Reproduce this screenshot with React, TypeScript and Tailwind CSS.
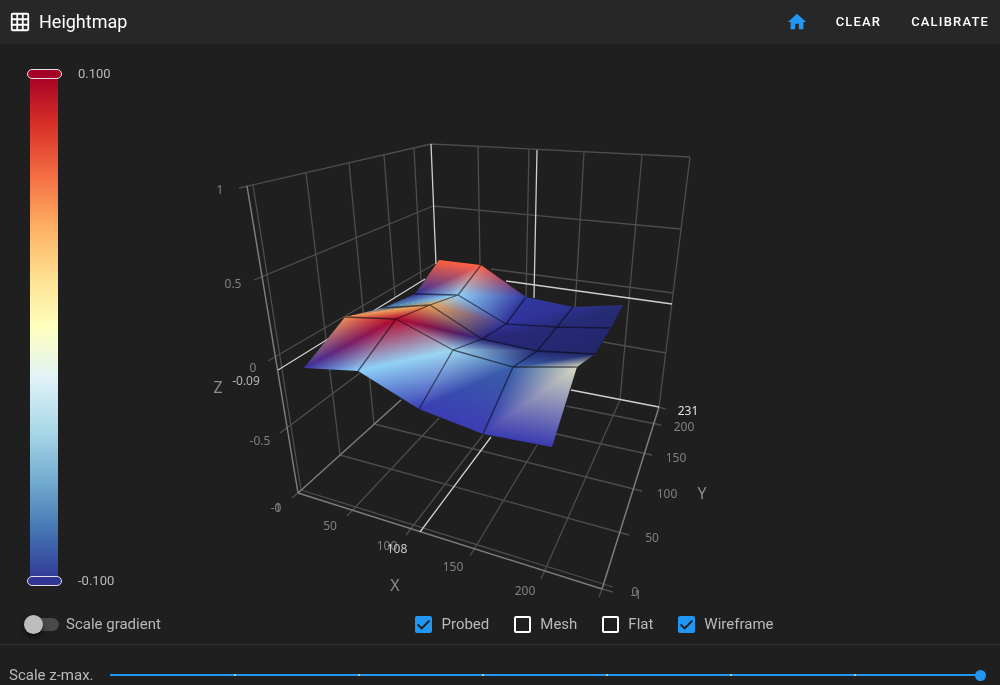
import { useState } from "react";

type Point = [number, number];
type RGB = [number, number, number];
type Vertex = { p: Point; c: RGB };
type Line = [number, number, number, number];

const v = (x: number, y: number, r: number, g: number, b: number): Vertex => ({
  p: [x, y],
  c: [r, g, b],
});

// Probed points, projected, from the back row to the front row.
const mesh: Vertex[][] = [
  [v(439, 260, 255, 96, 62), v(481, 265, 255, 98, 70), v(526, 297, 50, 56, 160), v(573, 307, 46, 50, 145), v(623, 305, 38, 44, 116)],
  [v(415, 294, 50, 48, 150), v(458, 295, 144, 208, 248), v(506, 324, 48, 52, 155), v(557, 327, 38, 42, 118), v(611, 328, 36, 40, 112)],
  [v(383, 308, 70, 120, 160), v(430, 305, 232, 166, 92), v(482, 339, 44, 38, 122), v(537, 351, 36, 40, 114), v(595, 354, 34, 38, 104)],
  [v(345, 317, 240, 140, 86), v(396, 319, 182, 8, 46), v(453, 350, 158, 214, 240), v(513, 367, 58, 96, 168), v(577, 367, 214, 218, 190)],
  [v(304, 368, 58, 52, 160), v(358, 371, 138, 206, 248), v(419, 409, 58, 62, 180), v(483, 434, 60, 60, 178), v(552, 447, 58, 58, 176)],
];

const gridLines: Line[] = [
  [239, 188, 431, 144], [254, 280, 433, 206], [268, 361, 436, 263], [280, 433, 360, 373],
  [253, 185, 301, 490], [306, 173, 340, 455], [349, 163, 374, 424], [384, 155, 395, 297], [414, 148, 421, 280],
  [431, 144, 690, 157], [433, 206, 681, 229], [491, 269, 673, 293], [603, 342, 666, 353],
  [478, 147, 480, 264], [529, 149, 526, 297], [584, 152, 575, 310], [642, 155, 620, 400], [690, 157, 659, 407],
  [301, 490, 613, 587], [340, 455, 629, 535], [374, 424, 642, 491], [556, 434, 652, 455], [566, 406, 661, 425],
  [347, 516, 439, 418], [406, 535, 483, 435], [470, 556, 537, 445], [541, 579, 620, 400],
  [602, 589, 613, 592], [602, 589, 599, 597], [659, 407, 666, 409], [298, 493, 292, 498],
];

const axisLines: Line[] = [
  [247, 186, 298, 493], [298, 493, 602, 589], [602, 589, 659, 407], [298, 493, 401, 400],
];

const pointerLines: Line[] = [
  [278, 370, 425, 279], [506, 281, 672, 304], [431, 144, 436, 264], [537, 150, 534, 298],
  [571, 390, 659, 407], [420, 532, 491, 437],
];

const tickLabels: { x: number; y: number; text: string; tone?: string }[] = [
  { x: 220, y: 194, text: "1" },
  { x: 233, y: 288, text: "0.5" },
  { x: 253, y: 372, text: "0" },
  { x: 246, y: 385, text: "-0.09", tone: "#b4b4b4" },
  { x: 260, y: 445, text: "-0.5" },
  { x: 276, y: 512, text: "-1" },
  { x: 278, y: 512, text: "0" },
  { x: 330, y: 530, text: "50" },
  { x: 387, y: 550, text: "100" },
  { x: 397, y: 553, text: "108", tone: "#c8c8c8" },
  { x: 453, y: 571, text: "150" },
  { x: 525, y: 595, text: "200" },
  { x: 688, y: 415, text: "231", tone: "#e0e0e0" },
  { x: 684, y: 431, text: "200" },
  { x: 676, y: 462, text: "150" },
  { x: 667, y: 498, text: "100" },
  { x: 652, y: 542, text: "50" },
  { x: 635, y: 596, text: "0" },
  { x: 636, y: 599, text: "-1" },
];

const outline = [
  ...mesh[0],
  ...mesh.slice(1, 4).map((row) => row[4]),
  ...[...mesh[4]].reverse(),
  mesh[3][0],
  mesh[2][0],
  mesh[1][0],
]
  .map((k) => k.p.join(","))
  .join(" ");

const rgb = (c: RGB) => `rgb(${c[0]},${c[1]},${c[2]})`;

function footOf(a: Point, b: Point, c: Point): Point {
  const dx = c[0] - b[0];
  const dy = c[1] - b[1];
  const t = ((a[0] - b[0]) * dx + (a[1] - b[1]) * dy) / (dx * dx + dy * dy);
  return [b[0] + t * dx, b[1] + t * dy];
}

// A triangle whose colour is interpolated between its corners: one
// gradient per corner, added together. The stroke closes the seams.
function ShadedTriangle({ id, corners }: { id: string; corners: Vertex[] }) {
  const points = corners.map((k) => k.p.join(",")).join(" ");
  return (
    <g className="isolate">
      {corners.map((k, i) => {
        const foot = footOf(k.p, corners[(i + 1) % 3].p, corners[(i + 2) % 3].p);
        const gid = `${id}-${i}`;
        return (
          <g key={gid} className="mix-blend-plus-lighter">
            <linearGradient id={gid} gradientUnits="userSpaceOnUse" x1={k.p[0]} y1={k.p[1]} x2={foot[0]} y2={foot[1]}>
              <stop offset="0" stopColor={rgb(k.c)} />
              <stop offset="1" stopColor="#000" />
            </linearGradient>
            <polygon
              points={points}
              fill={`url(#${gid})`}
              stroke={`url(#${gid})`}
              strokeLinejoin="round"
              shapeRendering="crispEdges"
            />
          </g>
        );
      })}
    </g>
  );
}

function Segments({ lines, stroke, width = 1.3 }: { lines: Line[]; stroke: string; width?: number }) {
  return (
    <path
      d={lines.map((l) => `M${l[0]} ${l[1]}L${l[2]} ${l[3]}`).join("")}
      stroke={stroke}
      strokeWidth={width}
      fill="none"
    />
  );
}

function Surface({ wireframe }: { wireframe: boolean }) {
  return (
    <g clipPath="url(#surface-outline)">
      <clipPath id="surface-outline">
        <polygon points={outline} />
      </clipPath>
      {mesh.slice(0, 4).map((back, r) => {
        const front = mesh[r + 1];
        const columns: Line[] = [1, 2, 3].map((c) => [...back[c].p, ...front[c].p] as Line);
        const row: Line[] = r > 0 ? [0, 1, 2, 3].map((c) => [...back[c].p, ...back[c + 1].p] as Line) : [];
        return (
          <g key={r}>
            {[0, 1, 2, 3].map((c) => (
              <g key={c}>
                <ShadedTriangle id={`t${r}${c}a`} corners={[back[c], back[c + 1], front[c]]} />
                <ShadedTriangle id={`t${r}${c}b`} corners={[front[c], back[c + 1], front[c + 1]]} />
              </g>
            ))}
            {wireframe && <Segments lines={[...columns, ...row]} stroke="rgba(10,10,20,0.6)" />}
          </g>
        );
      })}
    </g>
  );
}

function Chart({ probed, wireframe }: { probed: boolean; wireframe: boolean }) {
  return (
    <svg viewBox="130 44 870 560" className="block w-full" role="img" aria-label="Heightmap surface">
      <Segments lines={gridLines} stroke="#4d4d4d" />
      <Segments lines={axisLines} stroke="#7c7c7c" width={1.5} />
      <Segments lines={pointerLines} stroke="#cfcfcf" />
      {probed && <Surface wireframe={wireframe} />}
      <g fontSize="12" textAnchor="middle" className="font-['Noto_Sans',sans-serif]">
        {tickLabels.map((t, i) => (
          <text key={i} x={t.x} y={t.y} fill={t.tone ?? "#808080"}>
            {t.text}
          </text>
        ))}
      </g>
      <g fontSize="16" textAnchor="middle" fill="#8c8c8c" className="font-['Noto_Sans',sans-serif]">
        <text x="218" y="393">Z</text>
        <text x="395" y="591">X</text>
        <text x="702" y="499">Y</text>
      </g>
    </svg>
  );
}

function Check({ label, checked, onChange }: { label: string; checked: boolean; onChange: (on: boolean) => void }) {
  return (
    <label className="flex cursor-pointer items-center gap-[9px]">
      <span className="grid size-[18px] place-items-center">
        <input
          type="checkbox"
          checked={checked}
          onChange={(e) => onChange(e.target.checked)}
          className="peer size-[17px] appearance-none rounded-xs border-2 border-white [grid-area:1/1] checked:border-[#2196f3] checked:bg-[#2196f3]"
        />
        <svg
          viewBox="0 0 17 17"
          className="pointer-events-none hidden size-[17px] [grid-area:1/1] peer-checked:block"
          fill="none"
          stroke="#1f1f1f"
          strokeWidth="2"
        >
          <path d="M2.6 8.4L6.6 12.4L14.4 4.6" />
        </svg>
      </span>
      {label}
    </label>
  );
}

const handle = "z-10 h-[10px] w-[35px] shrink-0 rounded-full border border-[#e6dce6]";

export default function App() {
  const [options, setOptions] = useState({ Probed: true, Mesh: false, Flat: false, Wireframe: true });
  const [scaled, setScaled] = useState(false);
  const [zMax, setZMax] = useState(7);

  return (
    <div className="min-h-screen bg-[#1f1f1f] font-[Roboto,sans-serif] text-[15px] text-[#b9b9b9]">
      <header className="flex h-11 items-center bg-[#272727] pr-[11px] pl-[9px] text-white">
        <svg viewBox="0 0 24 24" className="size-[22px]" fill="currentColor" aria-hidden="true">
          <path d="M10,4V8H14V4H10M16,4V8H20V4H16M16,10V14H20V10H16M16,16V20H20V16H16M14,20V16H10V20H14M8,20V16H4V20H8M8,14V10H4V14H8M8,8V4H4V8H8M10,14H14V10H10V14M4,2H20A2,2 0 0,1 22,4V20A2,2 0 0,1 20,22H4C2.92,22 2,21.1 2,20V4A2,2 0 0,1 4,2Z" />
        </svg>
        <h1 className="ml-2 flex-1 text-[18px] leading-6">Heightmap</h1>
        <button type="button" aria-label="Home" className="mr-7 text-[#2196f3]">
          <svg viewBox="0 0 24 24" className="size-[22px]" fill="currentColor">
            <path d="M10,20V14H14V20H19V12H22L12,3L2,12H5V20H10Z" />
          </svg>
        </button>
        <div className="flex gap-[30px] text-[13px] font-medium">
          <button type="button" className="tracking-[0.09em]">CLEAR</button>
          <button type="button" className="tracking-[0.09em]">CALIBRATE</button>
        </div>
      </header>

      <main>
        <div className="flex">
          <div className="flex w-[130px] shrink-0 gap-4 pt-[25px] pb-[18px] pl-[27px]">
            <div className="flex flex-col">
              <button type="button" role="slider" aria-label="Maximum" aria-valuenow={0.1} className={`${handle} bg-[#a50026]`} />
              <div className="-my-[5px] ml-[3px] w-7 flex-1 bg-[linear-gradient(to_bottom,#a50026,#d73027_10%,#f46d43_20%,#fdae61_30%,#fee090_40%,#ffffbf_50%,#e0f3f8_60%,#abd9e9_70%,#74add1_80%,#4575b4_90%,#313695)]" />
              <button type="button" role="slider" aria-label="Minimum" aria-valuenow={-0.1} className={`${handle} bg-[#313695]`} />
            </div>
            <div className="flex flex-col justify-between text-[13px] leading-[10px]">
              <span>0.100</span>
              <span>-0.100</span>
            </div>
          </div>
          <div className="min-w-0 flex-1">
            <Chart probed={options.Probed} wireframe={options.Wireframe} />
          </div>
        </div>

        <div className="flex h-10 items-center">
          <label className="flex w-[188px] shrink-0 cursor-pointer items-center gap-[7px] pl-6">
            <span className="grid w-[35px] items-center">
              <span className="ml-1 h-[13px] rounded-full bg-[#494949] [grid-area:1/1]" />
              <input
                type="checkbox"
                role="switch"
                checked={scaled}
                onChange={(e) => setScaled(e.target.checked)}
                className="size-[19px] appearance-none rounded-full bg-[#bdbdbd] shadow-md shadow-black/60 [grid-area:1/1] checked:justify-self-end"
              />
            </span>
            Scale gradient
          </label>
          <div className="flex flex-1 justify-center gap-6">
            {(["Probed", "Mesh", "Flat", "Wireframe"] as const).map((name) => (
              <Check
                key={name}
                label={name}
                checked={options[name]}
                onChange={(on) => setOptions({ ...options, [name]: on })}
              />
            ))}
          </div>
        </div>

        <div className="flex h-[61px] items-center border-t border-[#343434] pr-[14px] pl-[9px]">
          <label htmlFor="zmax" className="w-[95px] shrink-0">Scale z-max.</label>
          <div className="grid flex-1 items-center">
            <div className="mx-[6px] flex h-[2px] justify-between bg-[#2196f3] [grid-area:1/1]">
              {[0, 1, 2, 3, 4, 5, 6, 7].map((n) => (
                <span key={n} className="size-[2px] bg-[#a9cdea] first:invisible last:invisible" />
              ))}
            </div>
            <input
              id="zmax"
              type="range"
              min={0}
              max={7}
              value={zMax}
              onChange={(e) => setZMax(Number(e.target.value))}
              className="w-full appearance-none bg-transparent [grid-area:1/1] [&::-webkit-slider-thumb]:size-[11px] [&::-webkit-slider-thumb]:appearance-none [&::-webkit-slider-thumb]:rounded-full [&::-webkit-slider-thumb]:bg-[#2196f3]"
            />
          </div>
        </div>
      </main>
    </div>
  );
}
